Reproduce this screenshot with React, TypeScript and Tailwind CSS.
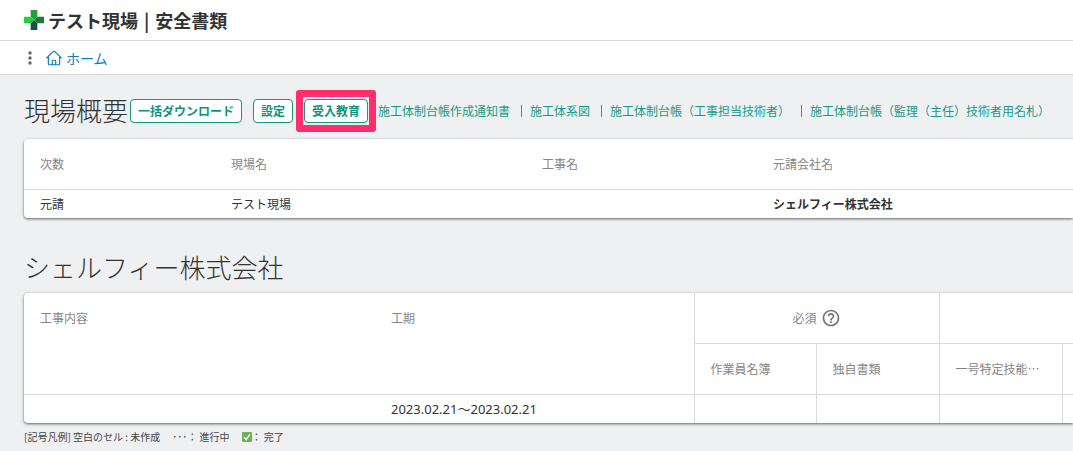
import type { ReactNode } from "react";
import { HiOutlineHome } from "react-icons/hi2";
import { MdHelpOutline, MdMoreVert } from "react-icons/md";

const documentLinks = [
  "施工体制台帳作成通知書",
  "施工体系図",
  "施工体制台帳（工事担当技術者）",
  "施工体制台帳（監理（主任）技術者用名札）",
];

function Logo() {
  return (
    <svg viewBox="0 0 21 21" className="size-5 shrink-0" aria-hidden="true">
      <path d="M7 0h7v7l-3.500 3.500L7 7z" fill="#1fa33c" />
      <path d="M0 7h7l3.500 3.500L7 14H0z" fill="#20cf3a" />
      <path d="M21 7h-7l-3.500 3.500L14 14h7z" fill="#1d7a42" />
      <path d="M7 21h7v-7l-3.500-3.500L7 14z" fill="#1f5046" />
    </svg>
  );
}

function CheckMark() {
  return (
    <svg viewBox="0 0 10 10" className="size-2.5" role="img" aria-label="完了">
      <rect width="10" height="10" rx="1" fill="#6fb152" />
      <path d="M2 5.300 4.200 7.600 8 2.200" fill="none" stroke="#fff" strokeWidth="1.400" />
    </svg>
  );
}

function ActionButton({ children }: { children: ReactNode }) {
  return (
    <button
      type="button"
      className="h-6 rounded border border-[#169884] bg-white px-[7px] text-xs leading-none font-bold whitespace-nowrap text-[#0f9380] shadow-xs"
    >
      {children}
    </button>
  );
}

function Card({ children }: { children: ReactNode }) {
  return (
    <div className="overflow-hidden rounded-l bg-white shadow-[0_1px_3px_rgba(0,0,0,0.6)]">{children}</div>
  );
}

const head = "px-4 text-left font-normal text-[#858585]";
const line = "border-[#dadbdc]";

export default function App() {
  return (
    <div className="min-h-screen overflow-hidden bg-[#eff0f2] font-['Noto_Sans_CJK_JP',sans-serif] text-[#333]">
      <header className="flex h-[41px] items-center gap-1 border-b border-[#dadbdc] bg-white px-6">
        <Logo />
        <h1 className="flex items-center gap-1.5 text-lg leading-6 font-bold">
          <span>テスト現場</span>
          <span>|</span>
          <span>安全書類</span>
        </h1>
      </header>
      <nav className="flex h-[34px] items-center border-b border-[#d8d9da] bg-white px-5" aria-label="パンくず">
        <button type="button" aria-label="メニュー" className="text-[#666]">
          <MdMoreVert className="size-5" />
        </button>
        <a href="#home" className="ml-[5px] flex items-center gap-[3px] text-sm leading-5 text-[#0c7dbb]">
          <HiOutlineHome className="size-[18px]" />
          ホーム
        </a>
      </nav>

      <main className="pt-4 pl-6">
        <section>
          <div className="flex h-10 items-center whitespace-nowrap">
            <h2 className="pb-0.5 text-[26px] leading-10 font-light">現場概要</h2>
            <div className="ml-0.5 flex items-center gap-[11px]">
              <ActionButton>一括ダウンロード</ActionButton>
              <ActionButton>設定</ActionButton>
              <div className="relative flex">
                <ActionButton>受入教育</ActionButton>
                <div className="pointer-events-none absolute -inset-x-2 -inset-y-[9px] rounded-[3px] border-7 border-[#ff2d6e]" />
              </div>
            </div>
            <ul className="ml-2.5 flex items-center text-xs leading-5 text-[#189985]">
              {documentLinks.map((label, i) => (
                <li key={label} className="flex items-center">
                  {i > 0 && <span className="mr-2 ml-[11px] h-3 w-px bg-[#777]" />}
                  <a href="#document">{label}</a>
                </li>
              ))}
            </ul>
          </div>

          <div className="mt-2">
            <Card>
              <table className="w-full table-fixed border-collapse text-xs">
                <colgroup>
                  <col className="w-[191px]" />
                  <col className="w-[311px]" />
                  <col className="w-[231px]" />
                  <col />
                </colgroup>
                <thead>
                  <tr className={`h-[50px] border-b ${line}`}>
                    <th className={head}>次数</th>
                    <th className={head}>現場名</th>
                    <th className={head}>工事名</th>
                    <th className={head}>元請会社名</th>
                  </tr>
                </thead>
                <tbody>
                  <tr className="h-[29px]">
                    <td className="px-4">元請</td>
                    <td className="px-4">テスト現場</td>
                    <td className="px-4" />
                    <td className="px-4 font-bold">シェルフィー株式会社</td>
                  </tr>
                </tbody>
              </table>
            </Card>
          </div>
        </section>

        <section className="mt-[29px]">
          <h2 className="text-[26px] leading-10 font-light">シェルフィー株式会社</h2>
          <div className="mt-1.5">
            <Card>
              <table className="w-full table-fixed border-collapse text-xs">
                <colgroup>
                  <col className="w-[351px]" />
                  <col className="w-[319px]" />
                  <col className="w-[122px]" />
                  <col className="w-[123px]" />
                  <col className="w-[123px]" />
                  <col />
                </colgroup>
                <thead>
                  <tr className="h-[50px]">
                    <th rowSpan={2} className={`${head} pt-[17px] align-top`}>工事内容</th>
                    <th rowSpan={2} className={`${head} pt-[17px] align-top`}>工期</th>
                    <th colSpan={2} className={`border ${line} border-t-0 font-normal text-[#858585]`}>
                      <div className="flex items-center justify-center gap-1">
                        必須
                        <MdHelpOutline className="size-5 text-[#757575]" />
                      </div>
                    </th>
                    <th colSpan={2} className={`border-b ${line}`} />
                  </tr>
                  <tr className="h-[51px]">
                    <th className={`${head} border-l ${line}`}>作業員名簿</th>
                    <th className={`${head} border-l ${line}`}>独自書類</th>
                    <th className={`${head} border-l ${line} whitespace-nowrap`}>一号特定技能⋯</th>
                    <th className={`border-l ${line}`} />
                  </tr>
                </thead>
                <tbody>
                  <tr className={`h-[29px] border-t ${line}`}>
                    <td />
                    <td className="px-4 font-['Noto_Sans','Noto_Sans_CJK_JP',sans-serif] text-[13px] leading-5 whitespace-nowrap">
                      2023.02.21〜2023.02.21
                    </td>
                    <td className={`border-l ${line}`} />
                    <td className={`border-l ${line}`} />
                    <td className={`border-l ${line}`} />
                    <td className={`border-l ${line}`} />
                  </tr>
                </tbody>
              </table>
            </Card>
          </div>
          <div className="mt-1.5 flex items-center text-[10px] leading-4 text-[#444]">
            <span>[記号凡例] 空白のセル : 未作成</span>
            <span className="ml-3">･･･： 進行中</span>
            <span className="ml-3 flex items-center">
              <CheckMark />： 完了
            </span>
          </div>
        </section>
      </main>
    </div>
  );
}
